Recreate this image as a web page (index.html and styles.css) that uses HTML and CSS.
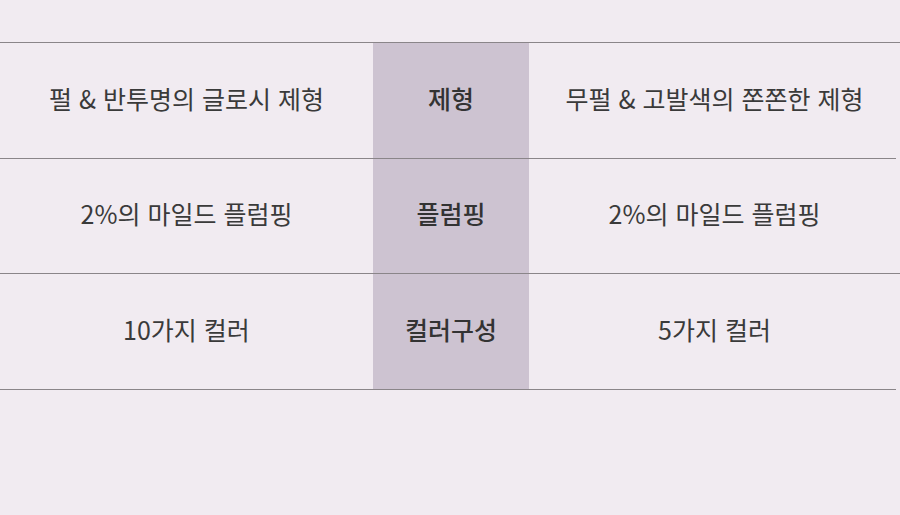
FILE: index.html
```html
<!DOCTYPE html>
<html lang="ko">
<head>
<meta charset="utf-8">
<link rel="stylesheet" href="styles.css">
</head>
<body>
<div class="page">
  <div class="rule"></div>
  <div class="row">
    <div class="cell">펄 &amp; 반투명의 글로시 제형</div>
    <div class="cell head">제형</div>
    <div class="cell">무펄 &amp; 고발색의 쫀쫀한 제형</div>
  </div>
  <div class="rule short"></div>
  <div class="row mid">
    <div class="cell">2%의 마일드 플럼핑</div>
    <div class="cell head">플럼핑</div>
    <div class="cell">2%의 마일드 플럼핑</div>
  </div>
  <div class="rule"></div>
  <div class="row">
    <div class="cell">10가지 컬러</div>
    <div class="cell head">컬러구성</div>
    <div class="cell">5가지 컬러</div>
  </div>
  <div class="rule short"></div>
</div>
</body>
</html>
```
FILE: styles.css
```css
html, body {
  margin: 0;
  padding: 0;
  background: #f1ebf1;
}
body {
  width: 900px;
  height: 515px;
  overflow: hidden;
  font-family: "Noto Sans CJK KR", "Noto Sans", sans-serif;
  color: #3a3a3a;
}
.page {
  padding-top: 42px;
  display: flex;
  flex-direction: column;
}
.rule {
  height: 1px;
  background: #8a8589;
  width: 900px;
  position: relative;
  z-index: 1;
}
.rule.short {
  width: 896px;
}
.row {
  display: grid;
  grid-template-columns: 373px 156px 371px;
  height: 115px;
}
.row.mid {
  height: 114px;
}
.cell {
  display: flex;
  align-items: center;
  justify-content: center;
  padding-bottom: 6px;
  box-sizing: border-box;
  font-size: 25px;
  font-weight: 400;
  white-space: nowrap;
}
.cell.head {
  background: #cdc3d1;
  font-weight: 500;
  color: #333333;
}
```
